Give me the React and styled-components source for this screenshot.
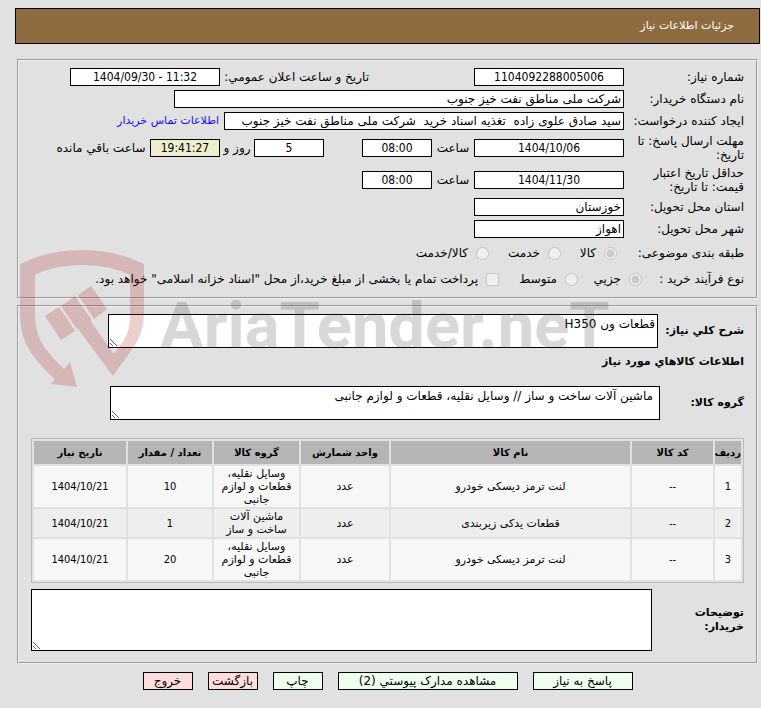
import React from 'react'
import styled, { createGlobalStyle } from 'styled-components'

const items = [
  { id: 1, code: '--', name: 'لنت ترمز دیسکی خودرو', unit: 'عدد', group: 'وسایل نقلیه، قطعات و لوازم جانبی', count: 10, date: '1404/10/21' },
  { id: 2, code: '--', name: 'قطعات یدکی زیربندی', unit: 'عدد', group: 'ماشین آلات ساخت و ساز', count: 1, date: '1404/10/21' },
  { id: 3, code: '--', name: 'لنت ترمز دیسکی خودرو', unit: 'عدد', group: 'وسایل نقلیه، قطعات و لوازم جانبی', count: 20, date: '1404/10/21' },
]

const Watermark = () => (
  <Mark aria-hidden="true">
    <svg width="126" height="140" viewBox="0 0 126 140">
      <g fill="#aa1414">
        <path d="M0 14 Q28 0 62 0 Q96 0 124 14 V63 Q124 81 115 95 L93 126 L58 79 L71 72 L94 104 L104 90 Q110 80 110 67 V25 Q90 15 62 15 Q34 15 15 25 V65 Q15 84 25 98 Q33 109 44 119 L50 112 L57 137 L31 134 L35 129 Q16 113 6 94 Q0 81 0 62 Z" />
        <path d="M25 66 L39 57 L55 81 L41 90 Z" />
        <path d="M41 56 L55 46 L71 69 L71 73 L58 79 L56 78 Z" />
        <path d="M58 45 L71 36 L87 59 L74 69 Z" />
      </g>
    </svg>
    <MarkText>AriaTender.neT</MarkText>
  </Mark>
)

const App = () => {
  return (
    <Page dir="rtl">
      <GlobalStyle />
      <TitleBar>جزئیات اطلاعات نیاز</TitleBar>

      <Panel>
        <Row>
          <Label htmlFor="number">شماره نیاز:</Label>
          <Group $width="255px">
            <Input id="number" $width="150px" $center readOnly value="1104092288005006" />
          </Group>
          <Label htmlFor="announce" $width="149px">تاریخ و ساعت اعلان عمومي:</Label>
          <Input id="announce" dir="ltr" $width="150px" $center readOnly value="1404/09/30 - 11:32" />
        </Row>
        <Row>
          <Label htmlFor="org">نام دستگاه خریدار:</Label>
          <Input id="org" $width="450px" readOnly value="شرکت ملی مناطق نفت خیز جنوب" />
        </Row>
        <Row>
          <Label htmlFor="creator">ایجاد کننده درخواست:</Label>
          <Input id="creator" $width="400px" readOnly value="سید صادق علوی زاده  تغذیه اسناد خرید  شرکت ملی مناطق نفت خیز جنوب" />
          <ContactLink href="#contact">اطلاعات تماس خریدار</ContactLink>
        </Row>
        <Row $height="32px">
          <Label htmlFor="deadline">مهلت ارسال پاسخ: تا<br />تاریخ:</Label>
          <Group $width="300px">
            <Input id="deadline" $width="150px" $center readOnly value="1404/10/06" />
            <Unit htmlFor="deadlineHour" $width="42px">ساعت</Unit>
            <Input id="deadlineHour" $width="70px" $center readOnly value="08:00" />
          </Group>
          <Input id="days" $width="70px" $center readOnly value="5" />
          <Unit htmlFor="days" $width="34px">روز و</Unit>
          <Input id="remaining" $width="70px" $center $bg="#eeeecc" readOnly value="19:41:27" />
          <Unit htmlFor="remaining" $width="98px">ساعت باقي مانده</Unit>
        </Row>
        <Row $height="32px">
          <Label htmlFor="validity">حداقل تاریخ اعتبار<br />قیمت: تا تاریخ:</Label>
          <Input id="validity" $width="150px" $center readOnly value="1404/11/30" />
          <Unit htmlFor="validityHour" $width="42px">ساعت</Unit>
          <Input id="validityHour" $width="70px" $center readOnly value="08:00" />
        </Row>
        <Row>
          <Label htmlFor="province">استان محل تحویل:</Label>
          <Input id="province" $width="150px" readOnly value="خوزستان" />
        </Row>
        <Row>
          <Label htmlFor="city">شهر محل تحویل:</Label>
          <Input id="city" $width="150px" readOnly value="اهواز" />
        </Row>
        <Row $height="26px">
          <Caption $width="127px">طبقه بندی موضوعی:</Caption>
          <Option $width="56px"><input type="radio" name="category" disabled defaultChecked />کالا</Option>
          <Option $width="72px"><input type="radio" name="category" disabled />خدمت</Option>
          <Option><input type="radio" name="category" disabled />کالا/خدمت</Option>
        </Row>
        <Row $height="26px">
          <Caption $width="102px">نوع فرآیند خرید :</Caption>
          <Option $width="64px"><input type="radio" name="process" disabled defaultChecked />جزیي</Option>
          <Option $width="79px"><input type="radio" name="process" disabled />متوسط</Option>
          <Option><input type="checkbox" disabled />پرداخت تمام یا بخشی از مبلغ خرید،از محل "اسناد خزانه اسلامی" خواهد بود.</Option>
        </Row>
      </Panel>

      <Panel $last>
        <AreaRow>
          <BoldLabel htmlFor="summary" $width="86px">شرح کلي نیاز:</BoldLabel>
          <Area id="summary" $width="550px" defaultValue="قطعات ون H350" />
        </AreaRow>
        <Heading>اطلاعات کالاهاي مورد نیاز</Heading>
        <AreaRow>
          <BoldLabel htmlFor="group" $width="84px">گروه کالا:</BoldLabel>
          <Area id="group" $width="550px" $indent defaultValue="ماشین آلات ساخت و ساز // وسایل نقلیه، قطعات و لوازم جانبی" />
        </AreaRow>
        <Table>
          <colgroup>
            <Col $width="26px" />
            <Col $width="81px" />
            <Col />
            <Col $width="88px" />
            <Col $width="85px" />
            <Col $width="84px" />
            <Col $width="92px" />
          </colgroup>
          <thead>
            <tr>
              <Th>ردیف</Th>
              <Th>کد کالا</Th>
              <Th>نام کالا</Th>
              <Th>واحد شمارش</Th>
              <Th>گروه کالا</Th>
              <Th>تعداد / مقدار</Th>
              <Th>تاریخ نیاز</Th>
            </tr>
          </thead>
          <tbody>
            {items.map((item) => (
              <ItemRow key={item.id}>
                <Num>{item.id}</Num>
                <Num>{item.code}</Num>
                <Cell>{item.name}</Cell>
                <Cell>{item.unit}</Cell>
                <Cell>{item.group}</Cell>
                <Num>{item.count}</Num>
                <Num>{item.date}</Num>
              </ItemRow>
            ))}
          </tbody>
        </Table>
        <AreaRow>
          <BoldLabel htmlFor="notes" $width="92px">توضیحات<br />خریدار:</BoldLabel>
          <Area id="notes" $height="62px" />
        </AreaRow>
      </Panel>

      <Actions>
        <Button $width="100px">پاسخ به نیاز</Button>
        <Button $width="180px">مشاهده مدارک پیوستي (2)</Button>
        <Button $width="50px">چاپ</Button>
        <Button $width="50px" $danger>بازگشت</Button>
        <Button $width="50px" $danger>خروج</Button>
      </Actions>
      <Watermark />
    </Page>
  )
}

export default App


const textFont = 'Tahoma, "DejaVu Sans", sans-serif'
const numberFont = 'Tahoma, "DejaVu Sans Condensed", "DejaVu Sans", sans-serif'

const GlobalStyle = createGlobalStyle`
  * {
    box-sizing: border-box;
  }
  body {
    margin: 0;
    background: #e1e1e1;
  }
  body, input, textarea, button {
    font-family: ${textFont};
  }
`;

const Page = styled.div`
  position: relative;
  padding: 8px 1px 16px 15px;
  font-size: 12px;
  line-height: 14px;
  color: #000;
`;

const TitleBar = styled.header`
  display: flex;
  align-items: center;
  height: 36px;
  margin-bottom: 15px;
  padding: 0 25px;
  border: 1px solid #000;
  background: #8f6c40;
  color: #fff;
  font-size: 11px;
`;

const Panel = styled.section`
  margin: 0 2px 6px;
  padding: ${(p) => (p.$last ? '5px 12px 9px' : '5px 12px')};
  border: 2px groove #f0f0f0;
`;

const Row = styled.div`
  display: flex;
  align-items: center;
  height: ${(p) => p.$height || '22px'};
`;

const Label = styled.label`
  flex: none;
  width: ${(p) => p.$width || '120px'};
  white-space: nowrap;
`;

const Caption = styled.span`
  flex: none;
  width: ${(p) => p.$width};
  white-space: nowrap;
`;

const Unit = styled(Label)`
  text-align: center;
`;

const Group = styled.div`
  display: flex;
  flex: none;
  align-items: center;
  width: ${(p) => p.$width};
`;

const Input = styled.input`
  width: ${(p) => p.$width};
  height: 18px;
  padding: 0 2px;
  border: 1px solid #000;
  background: ${(p) => p.$bg || '#fff'};
  font-family: ${(p) => (p.$center ? numberFont : textFont)};
  font-size: 12px;
  text-align: ${(p) => (p.$center ? 'center' : 'right')};
`;

const ContactLink = styled.a`
  margin-right: 5px;
  color: #1a0dff;
  font-size: 11px;
  text-decoration: none;
  white-space: nowrap;
`;

const Option = styled.label`
  display: flex;
  align-items: center;
  width: ${(p) => p.$width || 'auto'};
  white-space: nowrap;

  input {
    flex: none;
    width: 13px;
    height: 13px;
    margin: 0 0 0 8px;
  }
`;

const AreaRow = styled.div`
  display: flex;
  align-items: center;
  padding: 2px 0;
`;

const BoldLabel = styled(Label)`
  font-size: 11px;
  font-weight: bold;
`;

const Area = styled.textarea`
  display: block;
  flex: ${(p) => (p.$width ? 'none' : 1)};
  width: ${(p) => p.$width || 'auto'};
  height: ${(p) => p.$height || '34px'};
  padding: ${(p) => (p.$indent ? '2px 6px' : '2px')};
  border: 1px solid #000;
  background: #fff;
  font-size: 12px;
  line-height: 15px;
  overflow: hidden;
`;

const Heading = styled.h2`
  margin: 5px 0 15px;
  font-size: 11px;
  line-height: 14px;
`;

const Table = styled.table`
  width: 100%;
  margin: 16px 0 4px;
  table-layout: fixed;
  border: 1px solid #bbb;
  border-spacing: 2px;
  font-size: 11px;
  line-height: 13px;
  text-align: center;
`;

const Col = styled.col`
  width: ${(p) => p.$width || 'auto'};
`;

const Th = styled.th`
  height: 23px;
  padding: 0;
  background: #b5b5b5;
  font-size: 10px;
  white-space: nowrap;
`;

const ItemRow = styled.tr`
  background: #f7f7f7;

  &:nth-child(even) {
    background: #eee;
  }
`;

const Cell = styled.td`
  padding: 1px 4px;
`;

const Num = styled(Cell)`
  font-family: ${numberFont};
`;

const Actions = styled.div`
  display: flex;
  justify-content: center;
  gap: 15px;
  padding-top: 2px;
`;

const Button = styled.button`
  width: ${(p) => p.$width};
  height: 18px;
  padding: 0;
  border: 1px solid #000;
  background: ${(p) => (p.$danger ? '#ffdddd' : '#eeffee')};
  color: #000;
  font-size: 12px;
  line-height: 16px;
  white-space: nowrap;
`;

const Mark = styled.div`
  position: absolute;
  top: 250px;
  left: 20px;
  display: flex;
  direction: ltr;
  gap: 14px;
  opacity: 0.2;
  pointer-events: none;
`;

const MarkText = styled.span`
  padding-top: 26px;
  color: #404040;
  font-family: Roboto, sans-serif;
  font-size: 65px;
  font-weight: bold;
  line-height: 100px;
`;
